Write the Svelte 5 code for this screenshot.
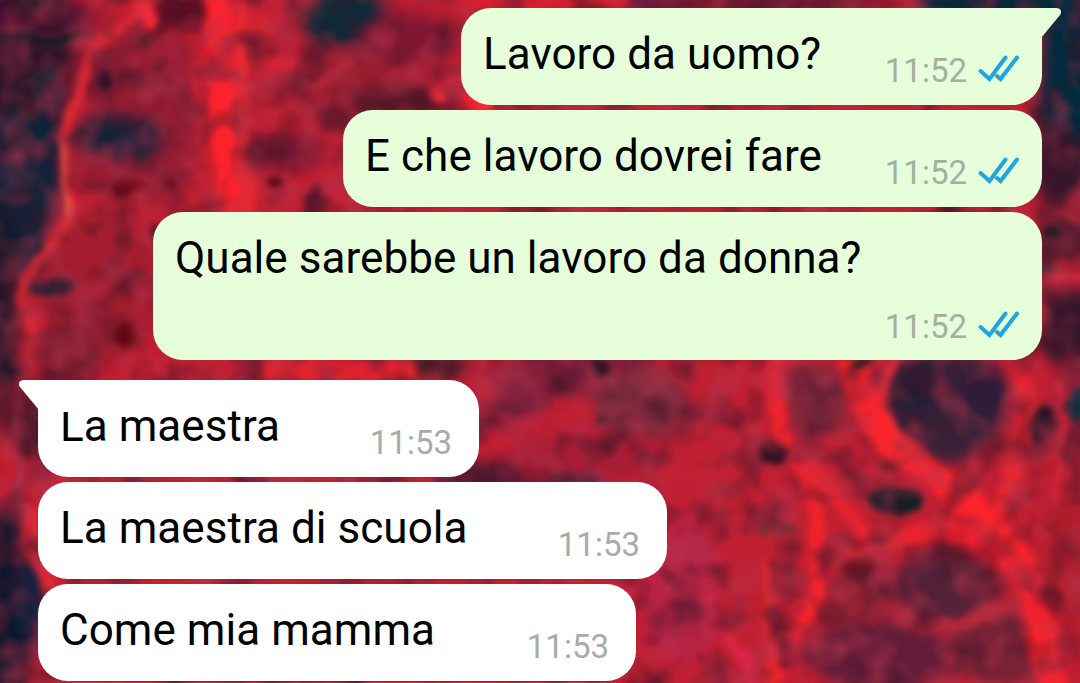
<script>
  const messages = [
    { text: 'Lavoro da uomo?', time: '11:52', sent: true, tail: true, width: 581 },
    { text: 'E che lavoro dovrei fare', time: '11:52', sent: true, width: 699 },
    { text: 'Quale sarebbe un lavoro da donna?', time: '11:52', sent: true, tall: true, width: 889 },
    { text: 'La maestra', time: '11:53', tail: true, width: 440.5 },
    { text: 'La maestra di scuola', time: '11:53', width: 628.5 },
    { text: 'Come mia mamma', time: '11:53', width: 597.5 }
  ]

  // Large soft areas: cx, cy, rx, ry, color
  const areas = [
    [22, 70, 50, 120, '#2a1229'],
    [22, 190, 38, 90, '#102238'],
    [3, 310, 15, 100, '#171426'],
    [8, 20, 85, 26, '#3d112d'],
    [110, 75, 45, 30, '#74152f'],
    [150, 110, 50, 95, '#981a30'],
    [118, 138, 43, 25, '#182338'],
    [180, 8, 32, 20, '#5a0e22'],
    [345, 20, 42, 36, '#082a38'],
    [330, 58, 35, 12, '#3e1426'],
    [405, 40, 48, 30, '#7e1830'],
    [285, 152, 40, 18, '#7c1930'],
    [340, 90, 50, 45, '#991c2e'],
    [400, 100, 60, 15, '#541325'],
    [100, 285, 55, 80, '#a21a2e'],
    [630, 0, 70, 10, '#6d1b49'],
    [780, 2, 100, 14, '#63142e'],
    [1010, 0, 100, 22, '#062b3e'],
    [1070, 75, 32, 90, '#062c3e'],
    [1060, 165, 25, 40, '#35142a'],
    [1070, 235, 26, 25, '#5b1b31'],
    [1072, 330, 32, 42, '#35172b'],
    [70, 350, 30, 30, '#7d1a2d'],
    [30, 425, 28, 35, '#4e1227'],
    [8, 610, 24, 105, '#10172b'],
    [30, 600, 15, 45, '#0c2440'],
    [435, 365, 33, 12, '#321c20'],
    [485, 475, 48, 17, '#511530'],
    [520, 390, 30, 30, '#84213f'],
    [590, 370, 65, 27, '#7e1b39'],
    [640, 405, 50, 35, '#78293a'],
    [585, 455, 75, 25, '#a91c36'],
    [680, 590, 38, 75, '#b82044'],
    [815, 400, 32, 37, '#7d253a'],
    [945, 405, 62, 56, '#392139'],
    [915, 385, 24, 24, '#1d1b34'],
    [982, 390, 24, 26, '#2a1a3a'],
    [945, 587, 54, 34, '#522139'],
    [880, 655, 70, 38, '#621f39'],
    [1000, 650, 55, 36, '#792234'],
    [860, 590, 35, 30, '#8e2034'],
    [1070, 410, 18, 60, '#851d31'],
    [1065, 560, 25, 100, '#b01d2a']
  ]

  // Bright veins: path, stroke width, color
  const veins = [
    ['M145 6 C115 30 82 45 78 95 C58 120 64 145 69 210 C67 235 28 260 21 298 C35 325 34 355 20 382', 11, '#d82832'],
    ['M63 145 C63 175 67 195 67 218', 4, '#f0634c'],
    ['M138 10 L150 18', 18, '#ef2939'],
    ['M216 0 C218 80 222 130 230 220', 25, '#fd222c'],
    ['M194 65 C190 100 212 120 207 205', 7, '#c52030'],
    ['M240 10 C238 90 242 150 245 220', 16, '#e82731'],
    ['M256 20 L265 65 L285 64', 22, '#d32331'],
    ['M285 55 L290 25', 12, '#b91e32'],
    ['M350 60 L315 85', 10, '#ad2534'],
    ['M270 372 C300 366 330 375 405 370', 18, '#e3212d'],
    ['M468 0 L620 0', 16, '#d91e2d'],
    ['M440 94 C470 80 460 95 485 108', 18, '#fa2631'],
    ['M1044 210 C1060 205 1070 220 1080 218', 7, '#a52435'],
    ['M1040 292 C1052 280 1065 276 1090 274', 8, '#d92c3b'],
    ['M777 350 C765 420 788 455 812 482 L817 590 L775 672', 15, '#f0232c'],
    ['M850 352 C870 430 905 457 957 494 C1020 530 1035 600 1052 690', 28, '#fd2229'],
    ['M850 350 C860 415 862 445 932 475', 15, '#f5252d'],
    ['M1018 375 C1040 440 1000 455 1003 525', 18, '#ef242e'],
    ['M900 535 C950 520 1008 535 1042 620', 18, '#f51e29'],
    ['M800 455 L865 535 L940 530', 13, '#e6232f'],
    ['M827 535 C845 560 860 552 898 544', 9, '#d12b38'],
    ['M765 560 L770 690', 8, '#e72b29'],
    ['M895 362 C865 390 902 462 957 490', 7, '#eb2c36'],
    ['M1055 385 C1070 420 1060 450 1052 500', 7, '#d5253b'],
    ['M900 622 C940 632 990 622 1015 600', 12, '#b52839'],
    ['M24 365 C8 435 20 490 18 520', 8, '#7c2039'],
    ['M0 455 L6 470', 14, '#c51923'],
    ['M28 510 L30 542 L48 585', 14, '#df2731'],
    ['M15 460 L25 515', 5, '#b73551'],
    ['M710 600 C716 630 740 640 750 683', 9, '#df2448']
  ]

  // Small dark cells
  const spots = [
    [48, 88, 17, 22, '#132237'], [28, 98, 8, 20, '#241523'],
    [105, 78, 10, 12, '#35102b'], [158, 70, 7, 9, '#68131e'],
    [42, 6, 25, 8, '#111c23'], [40, 38, 50, 7, '#111923'],
    [128, 187, 15, 8, '#650611'], [172, 184, 7, 9, '#72101d'],
    [273, 183, 10, 7, '#49070f'],
    [145, 40, 9, 6, '#60251d'], [315, 195, 8, 12, '#68132b'],
    [50, 286, 24, 9, '#302037'], [125, 333, 11, 14, '#620810'],
    [152, 235, 6, 13, '#4a0b1b'],
    [599, 369, 10, 12, '#201021'], [600, 421, 10, 7, '#49202d'],
    [631, 446, 8, 4, '#8a081c'], [575, 480, 25, 8, '#63243a'],
    [680, 532, 5, 5, '#a60f25'], [774, 454, 17, 9, '#230d1c'],
    [887, 467, 12, 7, '#861b2a'], [893, 501, 27, 13, '#101e25'],
    [863, 361, 10, 5, '#251a22'],
    [1042, 425, 11, 25, '#281426'],
    [857, 568, 18, 10, '#6c1422'],
    [865, 596, 12, 10, '#831b27'],
    [778, 530, 20, 7, '#84302e'], [793, 582, 6, 10, '#8e1b31'],
    [785, 653, 8, 15, '#92102c'],
    [1077, 403, 9, 18, '#063443'], [1053, 231, 8, 10, '#1a1b20'],
    [1048, 270, 10, 6, '#163b35']
  ]
</script>

<main>
  <svg class="wallpaper" viewBox="0 0 1080 683" aria-hidden="true">
    <defs>
      <filter id="area-blur" x="-50%" y="-100%" width="200%" height="300%"><feGaussianBlur stdDeviation="7" /></filter>
      <filter id="tissue" x="-40" y="-40" width="1160" height="763" filterUnits="userSpaceOnUse" color-interpolation-filters="sRGB">
        <feTurbulence type="fractalNoise" baseFrequency=".03" numOctaves="2" seed="8" result="noise" />
        <feDisplacementMap in="SourceGraphic" in2="noise" scale="18" xChannelSelector="R" yChannelSelector="G" result="shapes" />
        <feGaussianBlur in="shapes" stdDeviation="3" result="soft" />
        <feColorMatrix in="noise" type="matrix" values="0 0 0 0 .25  0 0 0 0 .08  0 0 0 0 .16  1.8 0 0 0 -.8" result="shade" />
        <feColorMatrix in="noise" type="matrix" values="0 0 0 0 .72  0 0 0 0 .2  0 0 0 0 .3  0 1.5 0 0 -.65" result="tint" />
        <feMerge result="merged">
          <feMergeNode in="soft" />
          <feMergeNode in="shade" />
          <feMergeNode in="tint" />
        </feMerge>
        <feGaussianBlur in="merged" stdDeviation="1" />
      </filter>
    </defs>
    <g filter="url(#tissue)">
      <rect x="-60" y="-60" width="1200" height="803" fill="#c01f31" />
      {#each areas as [cx, cy, rx, ry, color]}
        <ellipse {cx} {cy} {rx} {ry} fill={color} filter="url(#area-blur)" />
      {/each}
      {#each veins as [d, width, color]}
        <path {d} fill="none" stroke={color} stroke-width={width} stroke-linecap="round" />
      {/each}
      {#each spots as [cx, cy, rx, ry, color]}
        <ellipse {cx} {cy} {rx} {ry} fill={color} stroke="#a63742" stroke-opacity=".4" stroke-width="3" />
      {/each}
    </g>
  </svg>

  <ul>
    {#each messages as message}
      <li class:sent={message.sent} class:tail={message.tail} class:tall={message.tall} style:width="{message.width}px">
        {#if message.tail}
          <svg class="corner" viewBox="0 0 50 32" aria-hidden="true">
            <path d="M50 0H5Q1 0 0 3Q-.5 5 1 7L20 30V32H50Z" />
          </svg>
        {/if}
        <p>{message.text}</p>
        <span class="meta">
          <time>{message.time}</time>
          {#if message.sent}
            <svg class="ticks" viewBox="0 0 42 28" aria-label="Read">
              <path d="M2.5 16L11.5 24L27.5 2.5M19 21L22.5 24L39 2.5" />
            </svg>
          {/if}
        </span>
      </li>
    {/each}
  </ul>
</main>

<style>
:global(body) {
  margin: 0;
  overflow: hidden;
}

main {
  position: relative;
  width: 1080px;
  height: 683px;
  overflow: hidden;
  font-family: Roboto, sans-serif;
}

.wallpaper {
  position: absolute;
  inset: 0;
  width: 100%;
  height: 100%;
}

ul {
  position: relative;
  display: flex;
  flex-direction: column;
  gap: 5.5px;
  margin: 0;
  padding: 8px 38px 0;
  list-style: none;
}

li {
  position: relative;
  box-sizing: border-box;
  display: flex;
  justify-content: space-between;
  align-items: flex-start;
  height: 96.5px;
  padding: 20px 26.5px 0 22px;
  border-radius: 30px;
  background: #fff;
}

.sent {
  align-self: flex-end;
  padding-right: 22px;
  background: #e6ffda;
}

.sent.tail {
  border-top-right-radius: 0;
}

li.tail:not(.sent) {
  margin-top: 14.5px;
  border-top-left-radius: 0;
}

.tall {
  height: 148px;
  flex-direction: column;
  justify-content: flex-start;
}

p {
  margin: 0;
  color: #000;
  font-size: 44px;
  line-height: 52px;
  letter-spacing: 0.05px;
  white-space: nowrap;
}

.meta {
  display: flex;
  align-items: center;
  gap: 11px;
  margin-top: 23px;
}

.tall .meta {
  align-self: flex-end;
}

time {
  color: #a7acab;
  font-size: 33px;
  line-height: 40px;
}

.sent time {
  color: #a4afa1;
}

.corner {
  position: absolute;
  top: 0;
  left: -19px;
  width: 50px;
  height: 32px;
  fill: #fff;
}

.sent .corner {
  right: -19px;
  left: auto;
  fill: #e6ffda;
  transform: scaleX(-1);
}

.ticks {
  width: 42px;
  height: 28px;
  margin-top: -5px;
  fill: none;
  stroke: #1da6e0;
  stroke-width: 4;
  stroke-linecap: round;
}
</style>
